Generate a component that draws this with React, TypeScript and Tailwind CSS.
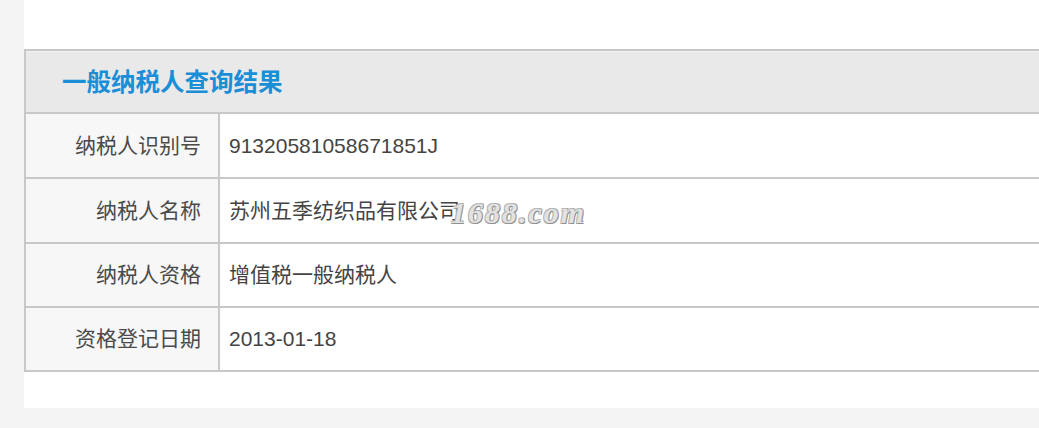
import React from "react";

const rows = [
  { label: "纳税人识别号", value: "91320581058671851J" },
  { label: "纳税人名称", value: "苏州五季纺织品有限公司", mark: true },
  { label: "纳税人资格", value: "增值税一般纳税人" },
  { label: "资格登记日期", value: "2013-01-18" },
];

export default function App() {
  const font = {
    fontFamily: '"Liberation Sans", Arial, "Noto Sans CJK SC", sans-serif',
  };
  return (
    <div className="w-[1039px] h-[428px] bg-[#f4f4f4] overflow-hidden pl-6" style={font}>
      <div className="w-[1100px] bg-white pt-[49px] pb-[36px]">
        <div className="border-2 border-r-0 border-[#c8c8c8]">
          <div className="h-[61px] bg-[#e9e9e9] flex items-center pl-[36px] pt-[3px] border-t border-[#f2f2f2]">
            <span className="text-[24.5px] font-bold text-[#1a8ed7] leading-none">一般纳税人查询结果</span>
          </div>
          {rows.map((r, i) => (
            <div
              key={i}
              className={`flex border-t-2 border-[#c8c8c8] ${i < 2 ? "h-[65px]" : "h-[64px]"}`}
            >
              <div className="w-[194px] shrink-0 bg-[#f7f7f7] border-r-2 border-[#c8c8c8] flex items-center justify-end pr-[17px] text-[21px] text-[#4a4a4a]">
                {r.label}
              </div>
              <div className="relative flex-1 flex items-center pl-[9px] text-[21px] text-[#444]">
                {r.value}
                {r.mark && (
                  <span
                    className="absolute left-[231px] top-[19px] text-[30px] italic font-bold tracking-[2px] text-[#e2e2e2] leading-none"
                    style={{
                      fontFamily: '"Liberation Serif", "Times New Roman", serif',
                      textShadow:
                        "1px 1px 0 #8f8f8f, -1px -1px 0 #b8b8b8, 1px -1px 0 #a8a8a8, -1px 1px 0 #a8a8a8",
                    }}
                  >
                    1688.com
                  </span>
                )}
              </div>
            </div>
          ))}
        </div>
      </div>
    </div>
  );
}
